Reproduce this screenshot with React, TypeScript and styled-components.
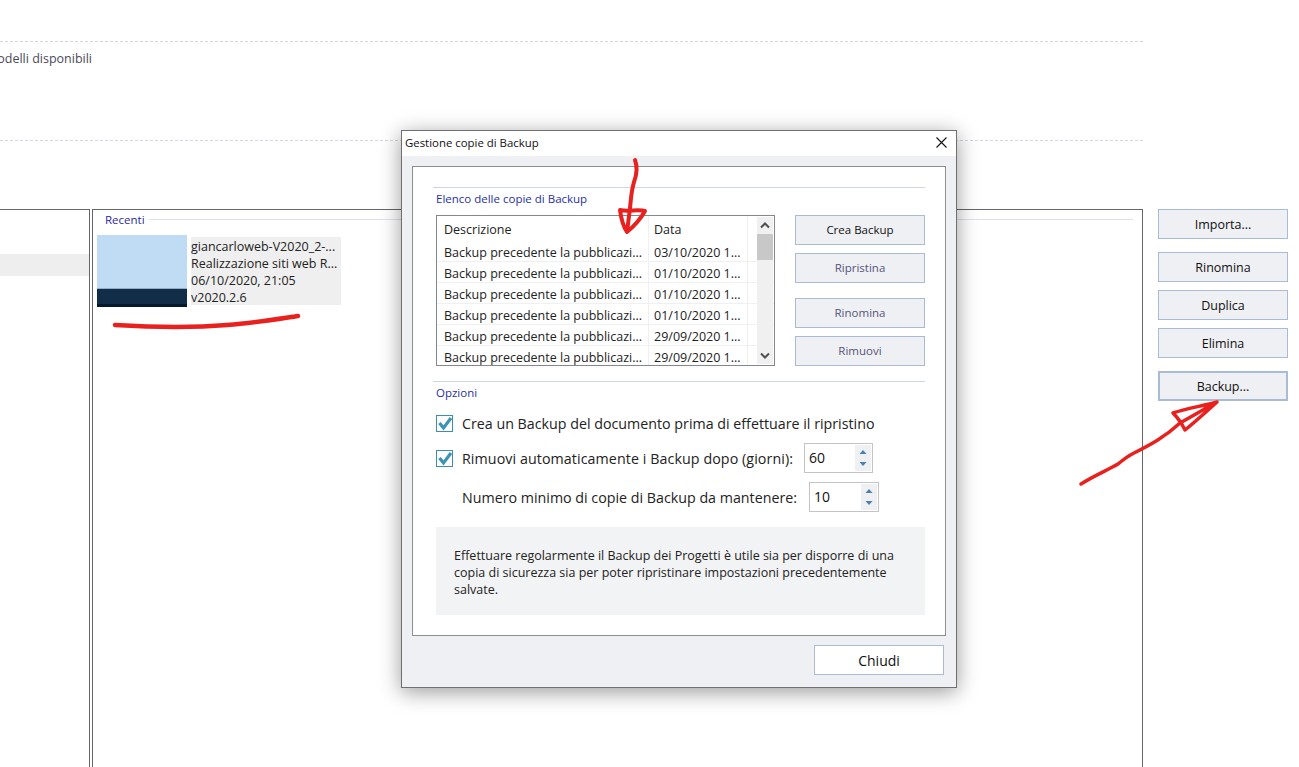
import React from 'react'
import styled, { createGlobalStyle } from 'styled-components'

const GlobalStyle = createGlobalStyle`
    html, body {
        margin: 0;
        padding: 0;
        background: #fff;
    }
    * {
        box-sizing: border-box;
    }
`

const Page = styled.div`
    position: relative;
    width: 1299px;
    height: 767px;
    overflow: hidden;
    background: #fff;
    padding-top: 41px;
    font-family: 'Open Sans', 'Liberation Sans', sans-serif;
    font-size: 12.5px;
    color: #111;
`

const TemplatesBand = styled.section`
    width: 1143px;
    height: 100px;
    border-top: 1px dashed #d3d7e2;
    border-bottom: 1px dashed #d3d7e2;
    overflow: hidden;
`

const TemplatesText = styled.p`
    margin: 8px 0 0 -14px;
    line-height: 17px;
    color: #4a4a5a;
    white-space: nowrap;
`

const Workspace = styled.div`
    display: flex;
    margin-top: 68px;
    height: 558px;
`

const SidePanel = styled.div`
    width: 90px;
    border-top: 1px solid #666;
    border-right: 1px solid #666;
    padding-top: 44px;
`

const SideRow = styled.div`
    height: 22px;
    background: #eee;
`

const RecentPanel = styled.div`
    width: 1051px;
    margin-left: 2px;
    border: 1px solid #666;
    border-bottom: none;
    padding: 0 9px 0 4px;
`

const RecentHeader = styled.div`
    display: flex;
    align-items: center;
    gap: 4px;
    height: 18px;
    padding-left: 8px;
    color: #2a2a9c;
    font-size: 11.5px;
`

const HeaderRule = styled.span`
    flex: 1;
    height: 1px;
    background: #dfe1ee;
`

const RecentItem = styled.div`
    display: flex;
    align-items: flex-start;
    gap: 4px;
    margin-top: 7px;
`

const Thumbnail = styled.div`
    width: 90px;
    height: 72px;
    background: linear-gradient(
        #c0dcf4 0,
        #c0dcf4 53px,
        #8fb0cc 53px,
        #8fb0cc 54px,
        #122d47 54px,
        #122d47 69px,
        #04192d 69px
    );
`

const RecentInfo = styled.div`
    width: 150px;
    height: 68px;
    margin-top: 2px;
    padding-top: 1px;
    background: #efefef;
    line-height: 17px;
    white-space: nowrap;
    overflow: hidden;
    color: #222;
`

const ActionColumn = styled.div`
    display: flex;
    flex-direction: column;
    width: 130px;
    margin-left: 15px;
`

const PlainButton = styled.button<{ $top?: number; $muted?: boolean; $strong?: boolean }>`
    display: block;
    width: 130px;
    height: 30px;
    flex: none;
    margin: ${p => p.$top ?? 0}px 0 0;
    padding: 0;
    background: #eff0f4;
    border: ${p => (p.$strong ? 2 : 1)}px solid #a9bcd3;
    font-family: inherit;
    font-size: inherit;
    color: ${p => (p.$muted ? '#55557a' : '#111')};
`

const Dialog = styled.div`
    position: absolute;
    left: 401px;
    top: 130px;
    width: 556px;
    height: 558px;
    background: #eff0f4;
    border: 1px solid #707070;
    box-shadow: 0 4px 20px rgba(0, 0, 0, 0.4);
`

const TitleBar = styled.div`
    display: flex;
    align-items: center;
    justify-content: space-between;
    height: 25px;
    padding: 0 9px 2px 3px;
    background: #fff;
    font-size: 11.4px;
    color: #111;
`

const CloseIcon = styled.svg`
    width: 11px;
    height: 11px;
    stroke: #111;
    stroke-width: 1.1;
    fill: none;
`

const DialogBody = styled.div`
    width: 534px;
    height: 470px;
    margin: 10px 0 0 10px;
    padding: 20px 20px 0 20px;
    background: #fff;
    border: 1px solid #8f8f8f;
`

const SectionRule = styled.div`
    height: 1px;
    background: #cdd5e6;
`

const SectionTitle = styled.div`
    height: 22px;
    padding: 3px 0 0 3px;
    line-height: 16px;
    font-size: 11.5px;
    color: #1f2fa6;
`

const ListRow = styled.div`
    display: flex;
    gap: 20px;
    padding: 5px 0 0 3px;
`

const BackupList = styled.div`
    position: relative;
    width: 339px;
    height: 151px;
    border: 1px solid #828790;
    overflow: hidden;
`

const ListHead = styled.div`
    display: flex;
    height: 25px;
    line-height: 28px;
    color: #222;
`

const ListLine = styled.div`
    display: flex;
    height: 21px;
    line-height: 24px;
    border-bottom: 1px solid #f0f0f0;
    white-space: nowrap;
    color: #222;
`

const DescCell = styled.div`
    width: 212px;
    flex: none;
    padding-left: 7px;
    border-right: 1px solid #f0f0f0;
    overflow: hidden;
`

const DateCell = styled.div`
    width: 99px;
    flex: none;
    padding-left: 5px;
    border-right: 1px solid #f0f0f0;
    overflow: hidden;
`

const ScrollTrack = styled.div`
    position: absolute;
    top: 1px;
    right: 1px;
    bottom: 1px;
    width: 16px;
    background: #f0f0f0;
    display: flex;
    flex-direction: column;
    justify-content: space-between;
`

const ScrollArrow = styled.svg`
    display: block;
    width: 16px;
    height: 17px;
    stroke: #505050;
    stroke-width: 2;
    fill: none;
`

const ScrollThumb = styled.div`
    position: absolute;
    top: 17px;
    left: 0;
    width: 16px;
    height: 26px;
    background: #c8c8c8;
`

const ListButtons = styled.div`
    display: flex;
    flex-direction: column;
    width: 130px;
    font-size: 11.5px;

    button {
        padding-bottom: 2px;
    }
`

const OptionsArea = styled.div`
    margin-top: 15px;
`

const OptionRow = styled.div<{ $top: number; $indent?: boolean }>`
    display: flex;
    align-items: center;
    height: 30px;
    margin-top: ${p => p.$top}px;
    padding-left: ${p => (p.$indent ? 29 : 3)}px;
    font-size: 14.25px;
    color: #222;
    white-space: nowrap;
`

const OptionLabel = styled.span<{ $width: number; $spread?: boolean }>`
    width: ${p => p.$width}px;
    flex: none;
    letter-spacing: ${p => (p.$spread ? '0.08px' : 'normal')};
`

const CheckBox = styled.svg`
    width: 17px;
    height: 17px;
    margin-right: 9px;
    flex: none;
    overflow: visible;
`

const SpinBox = styled.div<{ $wide?: boolean }>`
    display: flex;
    align-items: center;
    justify-content: space-between;
    width: ${p => (p.$wide ? 70 : 69)}px;
    height: 30px;
    padding: 1px 1px 1px 4px;
    border: 1px solid #c4c4c4;
    font-size: 14px;
    color: #111;
`

const SpinValue = styled.span`
    margin-top: -2px;
`

const SpinButtons = styled.svg`
    width: 16px;
    height: 26px;
    background: #eef0f4;
    fill: #4d80ad;
`

const NoteBox = styled.p`
    width: 489px;
    height: 88px;
    margin: 15px 0 0 3px;
    padding: 20px 18px 0;
    background: #f2f3f5;
    line-height: 17px;
    color: #222;
`

const DialogFooter = styled.div`
    display: flex;
    justify-content: flex-end;
    padding: 9px 12px 0 0;
`

const CloseButton = styled.button`
    width: 130px;
    height: 30px;
    padding: 0;
    background: #fff;
    border: 1px solid #a9bcd3;
    font-family: inherit;
    font-size: 14px;
    color: #111;
`

const Scribbles = styled.svg`
    position: absolute;
    left: 0;
    top: 0;
    width: 1299px;
    height: 767px;
    pointer-events: none;
    fill: none;
    stroke: #e8211f;
    stroke-linecap: round;
    stroke-linejoin: round;
`

const backups = ['03/10/2020 1...', '01/10/2020 1...', '01/10/2020 1...', '01/10/2020 1...', '29/09/2020 1...', '29/09/2020 1...']

const Check = () => (
    <CheckBox viewBox='0 0 17 17'>
        <rect x='0.5' y='0.5' width='16' height='16' fill='#fff' stroke='#3d8fb2' />
        <path d='M3.5 8 L7.5 13 L15 3' fill='none' stroke='#3d93b5' strokeWidth='3.2' />
    </CheckBox>
)

const Spinner = () => (
    <SpinButtons viewBox='0 0 16 26'>
        <path d='M8 5 L11.5 9 L4.5 9 Z' />
        <path d='M4.5 17 L11.5 17 L8 21 Z' />
    </SpinButtons>
)

const App = () => {
    return (
        <Page>
            <GlobalStyle />
            <TemplatesBand>
                <TemplatesText>Modelli disponibili</TemplatesText>
            </TemplatesBand>
            <Workspace>
                <SidePanel>
                    <SideRow />
                </SidePanel>
                <RecentPanel>
                    <RecentHeader>
                        Recenti
                        <HeaderRule />
                    </RecentHeader>
                    <RecentItem>
                        <Thumbnail />
                        <RecentInfo>
                            giancarloweb-V2020_2-...
                            <br />
                            Realizzazione siti web R...
                            <br />
                            06/10/2020, 21:05
                            <br />
                            v2020.2.6
                        </RecentInfo>
                    </RecentItem>
                </RecentPanel>
                <ActionColumn>
                    <PlainButton>Importa...</PlainButton>
                    <PlainButton $top={13}>Rinomina</PlainButton>
                    <PlainButton $top={8}>Duplica</PlainButton>
                    <PlainButton $top={8}>Elimina</PlainButton>
                    <PlainButton $top={13} $strong>
                        Backup...
                    </PlainButton>
                </ActionColumn>
            </Workspace>

            <Dialog>
                <TitleBar>
                    Gestione copie di Backup
                    <CloseIcon viewBox='0 0 11 11'>
                        <path d='M0.5 0.5 L10.5 10.5 M10.5 0.5 L0.5 10.5' />
                    </CloseIcon>
                </TitleBar>
                <DialogBody>
                    <SectionRule />
                    <SectionTitle>Elenco delle copie di Backup</SectionTitle>
                    <ListRow>
                        <BackupList>
                            <ListHead>
                                <DescCell>Descrizione</DescCell>
                                <DateCell>Data</DateCell>
                            </ListHead>
                            {backups.map((date, index) => (
                                <ListLine key={index}>
                                    <DescCell>Backup precedente la pubblicazi...</DescCell>
                                    <DateCell>{date}</DateCell>
                                </ListLine>
                            ))}
                            <ScrollTrack>
                                <ScrollArrow viewBox='0 0 16 17'>
                                    <path d='M4 10.5 L8 6.5 L12 10.5' />
                                </ScrollArrow>
                                <ScrollThumb />
                                <ScrollArrow viewBox='0 0 16 17'>
                                    <path d='M4 6.5 L8 10.5 L12 6.5' />
                                </ScrollArrow>
                            </ScrollTrack>
                        </BackupList>
                        <ListButtons>
                            <PlainButton>Crea Backup</PlainButton>
                            <PlainButton $top={8} $muted>
                                Ripristina
                            </PlainButton>
                            <PlainButton $top={15} $muted>
                                Rinomina
                            </PlainButton>
                            <PlainButton $top={8} $muted>
                                Rimuovi
                            </PlainButton>
                        </ListButtons>
                    </ListRow>
                    <OptionsArea>
                        <SectionRule />
                        <SectionTitle>Opzioni</SectionTitle>
                    </OptionsArea>
                    <OptionRow $top={4}>
                        <Check />
                        Crea un Backup del documento prima di effettuare il ripristino
                    </OptionRow>
                    <OptionRow $top={5}>
                        <Check />
                        <OptionLabel $width={342} $spread>
                            Rimuovi automaticamente i Backup dopo (giorni):
                        </OptionLabel>
                        <SpinBox>
                            <SpinValue>60</SpinValue>
                            <Spinner />
                        </SpinBox>
                    </OptionRow>
                    <OptionRow $top={9} $indent>
                        <OptionLabel $width={347}>Numero minimo di copie di Backup da mantenere:</OptionLabel>
                        <SpinBox $wide>
                            <SpinValue>10</SpinValue>
                            <Spinner />
                        </SpinBox>
                    </OptionRow>
                    <NoteBox>
                        Effettuare regolarmente il Backup dei Progetti è utile sia per disporre di una copia di
                        sicurezza sia per poter ripristinare impostazioni precedentemente salvate.
                    </NoteBox>
                </DialogBody>
                <DialogFooter>
                    <CloseButton>Chiudi</CloseButton>
                </DialogFooter>
            </Dialog>

            <Scribbles viewBox='0 0 1299 767'>
                <path
                    strokeWidth='4'
                    d='M635 160 C638 168 637 174 634 182 C631 192 631 200 630 208 L627 232 C623 226 621 218 620 210 C628 212 638 209 645 211 C640 220 633 227 627 232'
                />
                <path strokeWidth='4.5' d='M115 325 C150 327 190 328 227 325 C255 323 278 319 298 316' />
                <path
                    strokeWidth='3.5'
                    d='M1081 484 C1095 475 1108 470 1118 464 C1124 459 1128 456 1134 453 C1150 445 1165 437 1180 423 L1217 402 C1203 406 1188 408 1173 413 C1178 418 1182 424 1185 430 C1195 422 1206 412 1217 402'
                />
            </Scribbles>
        </Page>
    )
}

export default App
